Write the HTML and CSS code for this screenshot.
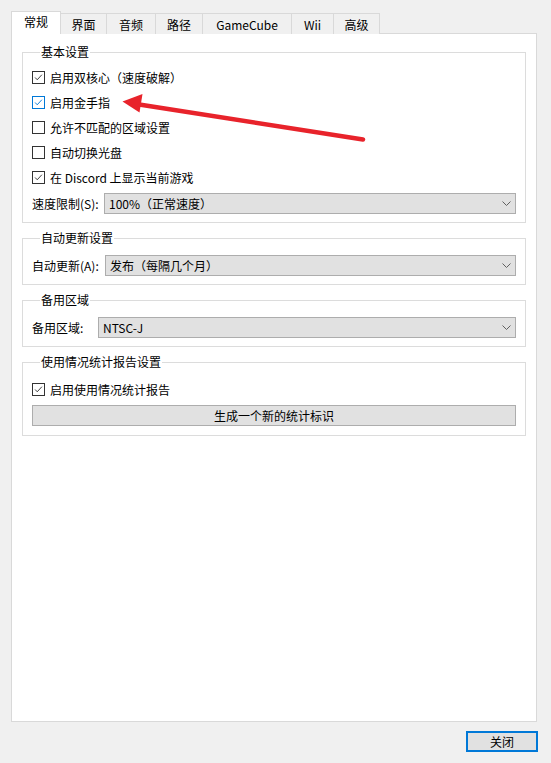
FILE: index.html
```html
<!DOCTYPE html>
<html lang="zh-CN">
<head>
<meta charset="utf-8">
<title>设置</title>
<link rel="stylesheet" href="styles.css">
</head>
<body>
<div class="window">
  <div class="tabs">
    <div class="tab active w-changgui">常规</div>
    <div class="tab w-jiemian">界面</div>
    <div class="tab w-yinpin">音频</div>
    <div class="tab w-lujing">路径</div>
    <div class="tab w-gc">GameCube</div>
    <div class="tab w-wii">Wii</div>
    <div class="tab w-gaoji">高级</div>
  </div>
  <div class="panel">
    <fieldset class="group g-basic">
      <legend>基本设置</legend>
      <div class="row"><span class="cb"><svg viewBox="0 0 13 13"><path d="M2.5 6.5 L5 9.2 L10.5 3.2" /></svg></span><span>启用双核心（速度破解）</span></div>
      <div class="row"><span class="cb focus"><svg viewBox="0 0 13 13"><path d="M2.5 6.5 L5 9.2 L10.5 3.2" /></svg></span><span>启用金手指</span></div>
      <div class="row"><span class="cb"></span><span>允许不匹配的区域设置</span></div>
      <div class="row"><span class="cb"></span><span>自动切换光盘</span></div>
      <div class="row"><span class="cb"><svg viewBox="0 0 13 13"><path d="M2.5 6.5 L5 9.2 L10.5 3.2" /></svg></span><span>在 Discord 上显示当前游戏</span></div>
      <div class="field f-speed">
        <span class="lbl l-speed">速度限制(S):</span>
        <div class="combo"><span>100%（正常速度）</span><svg class="chev" viewBox="0 0 9 5"><path d="M0.5 0.5 L4.5 4.5 L8.5 0.5" /></svg></div>
      </div>
    </fieldset>

    <fieldset class="group g-update">
      <legend>自动更新设置</legend>
      <div class="field">
        <span class="lbl l-update">自动更新(A):</span>
        <div class="combo"><span>发布（每隔几个月）</span><svg class="chev" viewBox="0 0 9 5"><path d="M0.5 0.5 L4.5 4.5 L8.5 0.5" /></svg></div>
      </div>
    </fieldset>

    <fieldset class="group g-region">
      <legend>备用区域</legend>
      <div class="field">
        <span class="lbl l-region">备用区域:</span>
        <div class="combo"><span>NTSC-J</span><svg class="chev" viewBox="0 0 9 5"><path d="M0.5 0.5 L4.5 4.5 L8.5 0.5" /></svg></div>
      </div>
    </fieldset>

    <fieldset class="group g-stats">
      <legend>使用情况统计报告设置</legend>
      <div class="row"><span class="cb"><svg viewBox="0 0 13 13"><path d="M2.5 6.5 L5 9.2 L10.5 3.2" /></svg></span><span>启用使用情况统计报告</span></div>
      <div class="btn wide">生成一个新的统计标识</div>
    </fieldset>
  </div>
  <div class="footer">
    <div class="btn close">关闭</div>
  </div>
</div>
<svg class="arrow" viewBox="0 0 551 763" width="551" height="763">
  <line x1="363" y1="139.5" x2="136" y2="104" />
  <polygon points="122.5,101.5 142.5,94 139.5,112.5" />
</svg>
</body>
</html>
```
FILE: styles.css
```css
* { box-sizing: border-box; }
html, body {
  margin: 0;
  padding: 0;
  background: #f0f0f0;
  font-family: "Noto Sans CJK SC", "Noto Sans", sans-serif;
  font-size: 12px;
  color: #000;
}
.window {
  position: relative;
  width: 551px;
  height: 763px;
  padding: 11px 14px 0 11px;
}
.tabs {
  display: flex;
  align-items: flex-end;
  height: 23px;
  position: relative;
  z-index: 2;
  margin-bottom: -1px;
}
.tab {
  height: 21px;
  border: 1px solid #d9d9d9;
  border-bottom: none;
  background: #f0f0f0;
  margin-left: -1px;
  display: flex;
  align-items: center;
  justify-content: center;
  line-height: 16px;
  padding-top: 1px;
}
.tab.active {
  height: 23px;
  margin-left: 0;
  background: #fff;
  padding-top: 0;
  padding-bottom: 2px;
}
.w-changgui { width: 50px; }
.w-jiemian { width: 47px; }
.w-yinpin { width: 50px; }
.w-lujing { width: 48px; }
.w-gc { width: 90px; }
.w-wii { width: 43px; }
.w-gaoji { width: 47px; }

.panel {
  background: #fff;
  border: 1px solid #d9d9d9;
  height: 689px;
  padding: 10px 10px 0 10px;
  display: flex;
  flex-direction: column;
  gap: 7px;
}
.group {
  margin: 0;
  border: 1px solid #dcdcdc;
  padding: 0 9px 8px 9px;
  min-width: 0;
}
.group legend {
  padding: 0 1px;
  margin-left: 8px;
  line-height: 16px;
  height: 16px;
}
.g-basic { padding-top: 5px; }
.g-update { padding-top: 9px; padding-bottom: 8px; }
.g-region { padding-top: 9px; padding-bottom: 8px; }
.g-stats { padding-top: 7px; padding-bottom: 9px; }

.row {
  height: 25px;
  display: flex;
  align-items: center;
  gap: 5px;
  line-height: 16px;
}
.cb {
  width: 13px;
  height: 13px;
  border: 1px solid #333;
  background: #fff;
  flex: none;
  display: flex;
}
.cb svg {
  width: 11px;
  height: 11px;
  fill: none;
  stroke: #333;
  stroke-width: 1.1;
}
.cb.focus { border-color: #0078d7; }
.cb.focus svg { stroke: #0078d7; }

.field {
  display: flex;
  align-items: center;
  height: 21px;
}
.f-speed { margin-top: 3px; }
.lbl { flex: none; line-height: 16px; }
.l-speed { width: 72px; }
.l-update { width: 73px; }
.l-region { width: 66px; }
.combo {
  flex: 1;
  height: 21px;
  background: #e1e1e1;
  border: 1px solid #adadad;
  display: flex;
  align-items: center;
  padding: 0 4px 0 4px;
  line-height: 16px;
}
.combo span { flex: 1; }
.chev {
  width: 9px;
  height: 5px;
  fill: none;
  stroke: #606060;
  stroke-width: 1;
}

.btn {
  height: 21px;
  background: #e1e1e1;
  border: 1px solid #adadad;
  display: flex;
  align-items: center;
  justify-content: center;
  line-height: 16px;
}
.wide { margin-top: 3px; }
.footer {
  display: flex;
  justify-content: flex-end;
  padding-top: 9px;
}
.close {
  width: 72px;
  border: 2px solid #0078d7;
  margin-right: -1px;
}
.arrow {
  position: absolute;
  left: 0;
  top: 0;
  pointer-events: none;
}
.arrow line {
  stroke: #e8232b;
  stroke-width: 4.5;
  stroke-linecap: round;
}
.arrow polygon {
  fill: #e8232b;
}
```
